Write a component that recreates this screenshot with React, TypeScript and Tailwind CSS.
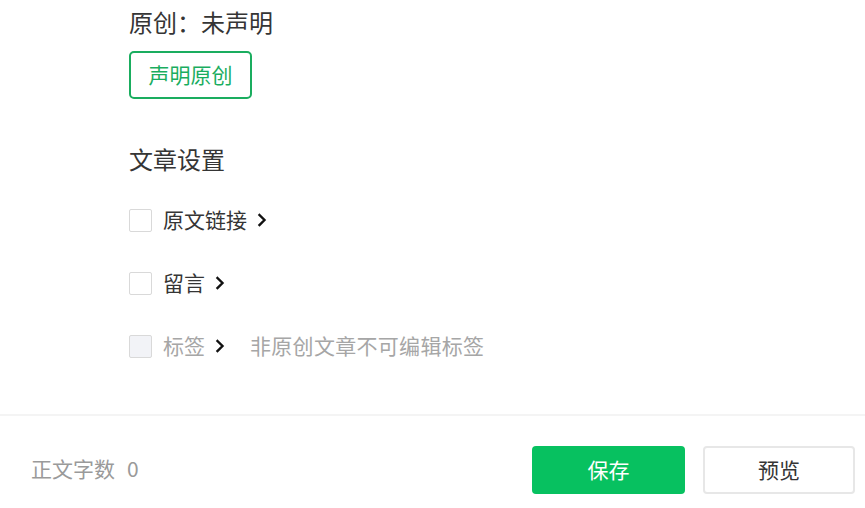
import React from "react";

const Chevron = ({ className = "" }: { className?: string }) => (
  <svg width="10" height="14" viewBox="0 0 10 14" className={className}>
    <path d="M2.5 2 L7.5 7 L2.5 12" fill="none" stroke="currentColor" strokeWidth="2.4" strokeLinecap="square" strokeLinejoin="miter" />
  </svg>
);

export default function App() {
  const font = { fontFamily: '"Noto Sans CJK SC", "Noto Sans", sans-serif' };
  return (
    <div className="w-[865px] h-[508px] bg-white overflow-hidden flex flex-col" style={font}>
      <div className="pl-[129px] pt-[5px] flex flex-col items-start">
        <div className="text-[24px] leading-[34px] text-[#353535]">原创：未声明</div>
        <button className="mt-[12px] w-[123px] h-[48px] border-2 border-[#1aad5f] rounded-[5px] text-[21px] text-[#1aad5f] flex items-center justify-center">
          声明原创
        </button>
        <div className="mt-[43px] text-[24px] leading-[34px] text-[#353535]">文章设置</div>
        <div className="mt-[13px] flex flex-col">
          <div className="h-[63px] flex items-center">
            <span className="w-[23px] h-[23px] border border-[#d9d9d9] bg-white rounded-[2px] -mt-[1px]" />
            <span className="ml-[11px] text-[21px] leading-[30px] text-[#353535] -mt-[3px]">原文链接</span>
            <Chevron className="ml-[10px] text-[#111] -mt-[1px]" />
          </div>
          <div className="h-[63px] flex items-center">
            <span className="w-[23px] h-[23px] border border-[#d9d9d9] bg-white rounded-[2px] -mt-[1px]" />
            <span className="ml-[11px] text-[21px] leading-[30px] text-[#353535] -mt-[3px]">留言</span>
            <Chevron className="ml-[10px] text-[#111] -mt-[1px]" />
          </div>
          <div className="h-[63px] flex items-center">
            <span className="w-[23px] h-[23px] border border-[#d9d9d9] bg-[#f2f3f7] rounded-[2px] -mt-[1px]" />
            <span className="ml-[11px] text-[21px] leading-[30px] text-[#a6a6a6] -mt-[3px]">标签</span>
            <Chevron className="ml-[10px] text-[#111] -mt-[1px]" />
            <span className="ml-[25px] text-[21px] leading-[30px] text-[#a6a6a6] tracking-[0.3px] -mt-[3px]">非原创文章不可编辑标签</span>
          </div>
        </div>
      </div>
      <div className="mt-[36px] h-[2px] bg-[#f4f4f4]" />
      <div className="flex items-center pl-[31px] pr-[10px] pt-[30px]">
        <div className="text-[21px] text-[#9a9a9a] flex items-center -mt-[2px]">
          <span>正文字数</span>
          <span className="ml-[12px]">0</span>
        </div>
        <div className="ml-auto flex gap-[18px]">
          <button className="w-[153px] h-[48px] rounded-[4px] bg-[#07c160] text-white text-[21px] flex items-center justify-center">保存</button>
          <button className="w-[152px] h-[48px] rounded-[4px] border-2 border-[#e7e7e7] bg-white text-[#353535] text-[21px] flex items-center justify-center">预览</button>
        </div>
      </div>
    </div>
  );
}
